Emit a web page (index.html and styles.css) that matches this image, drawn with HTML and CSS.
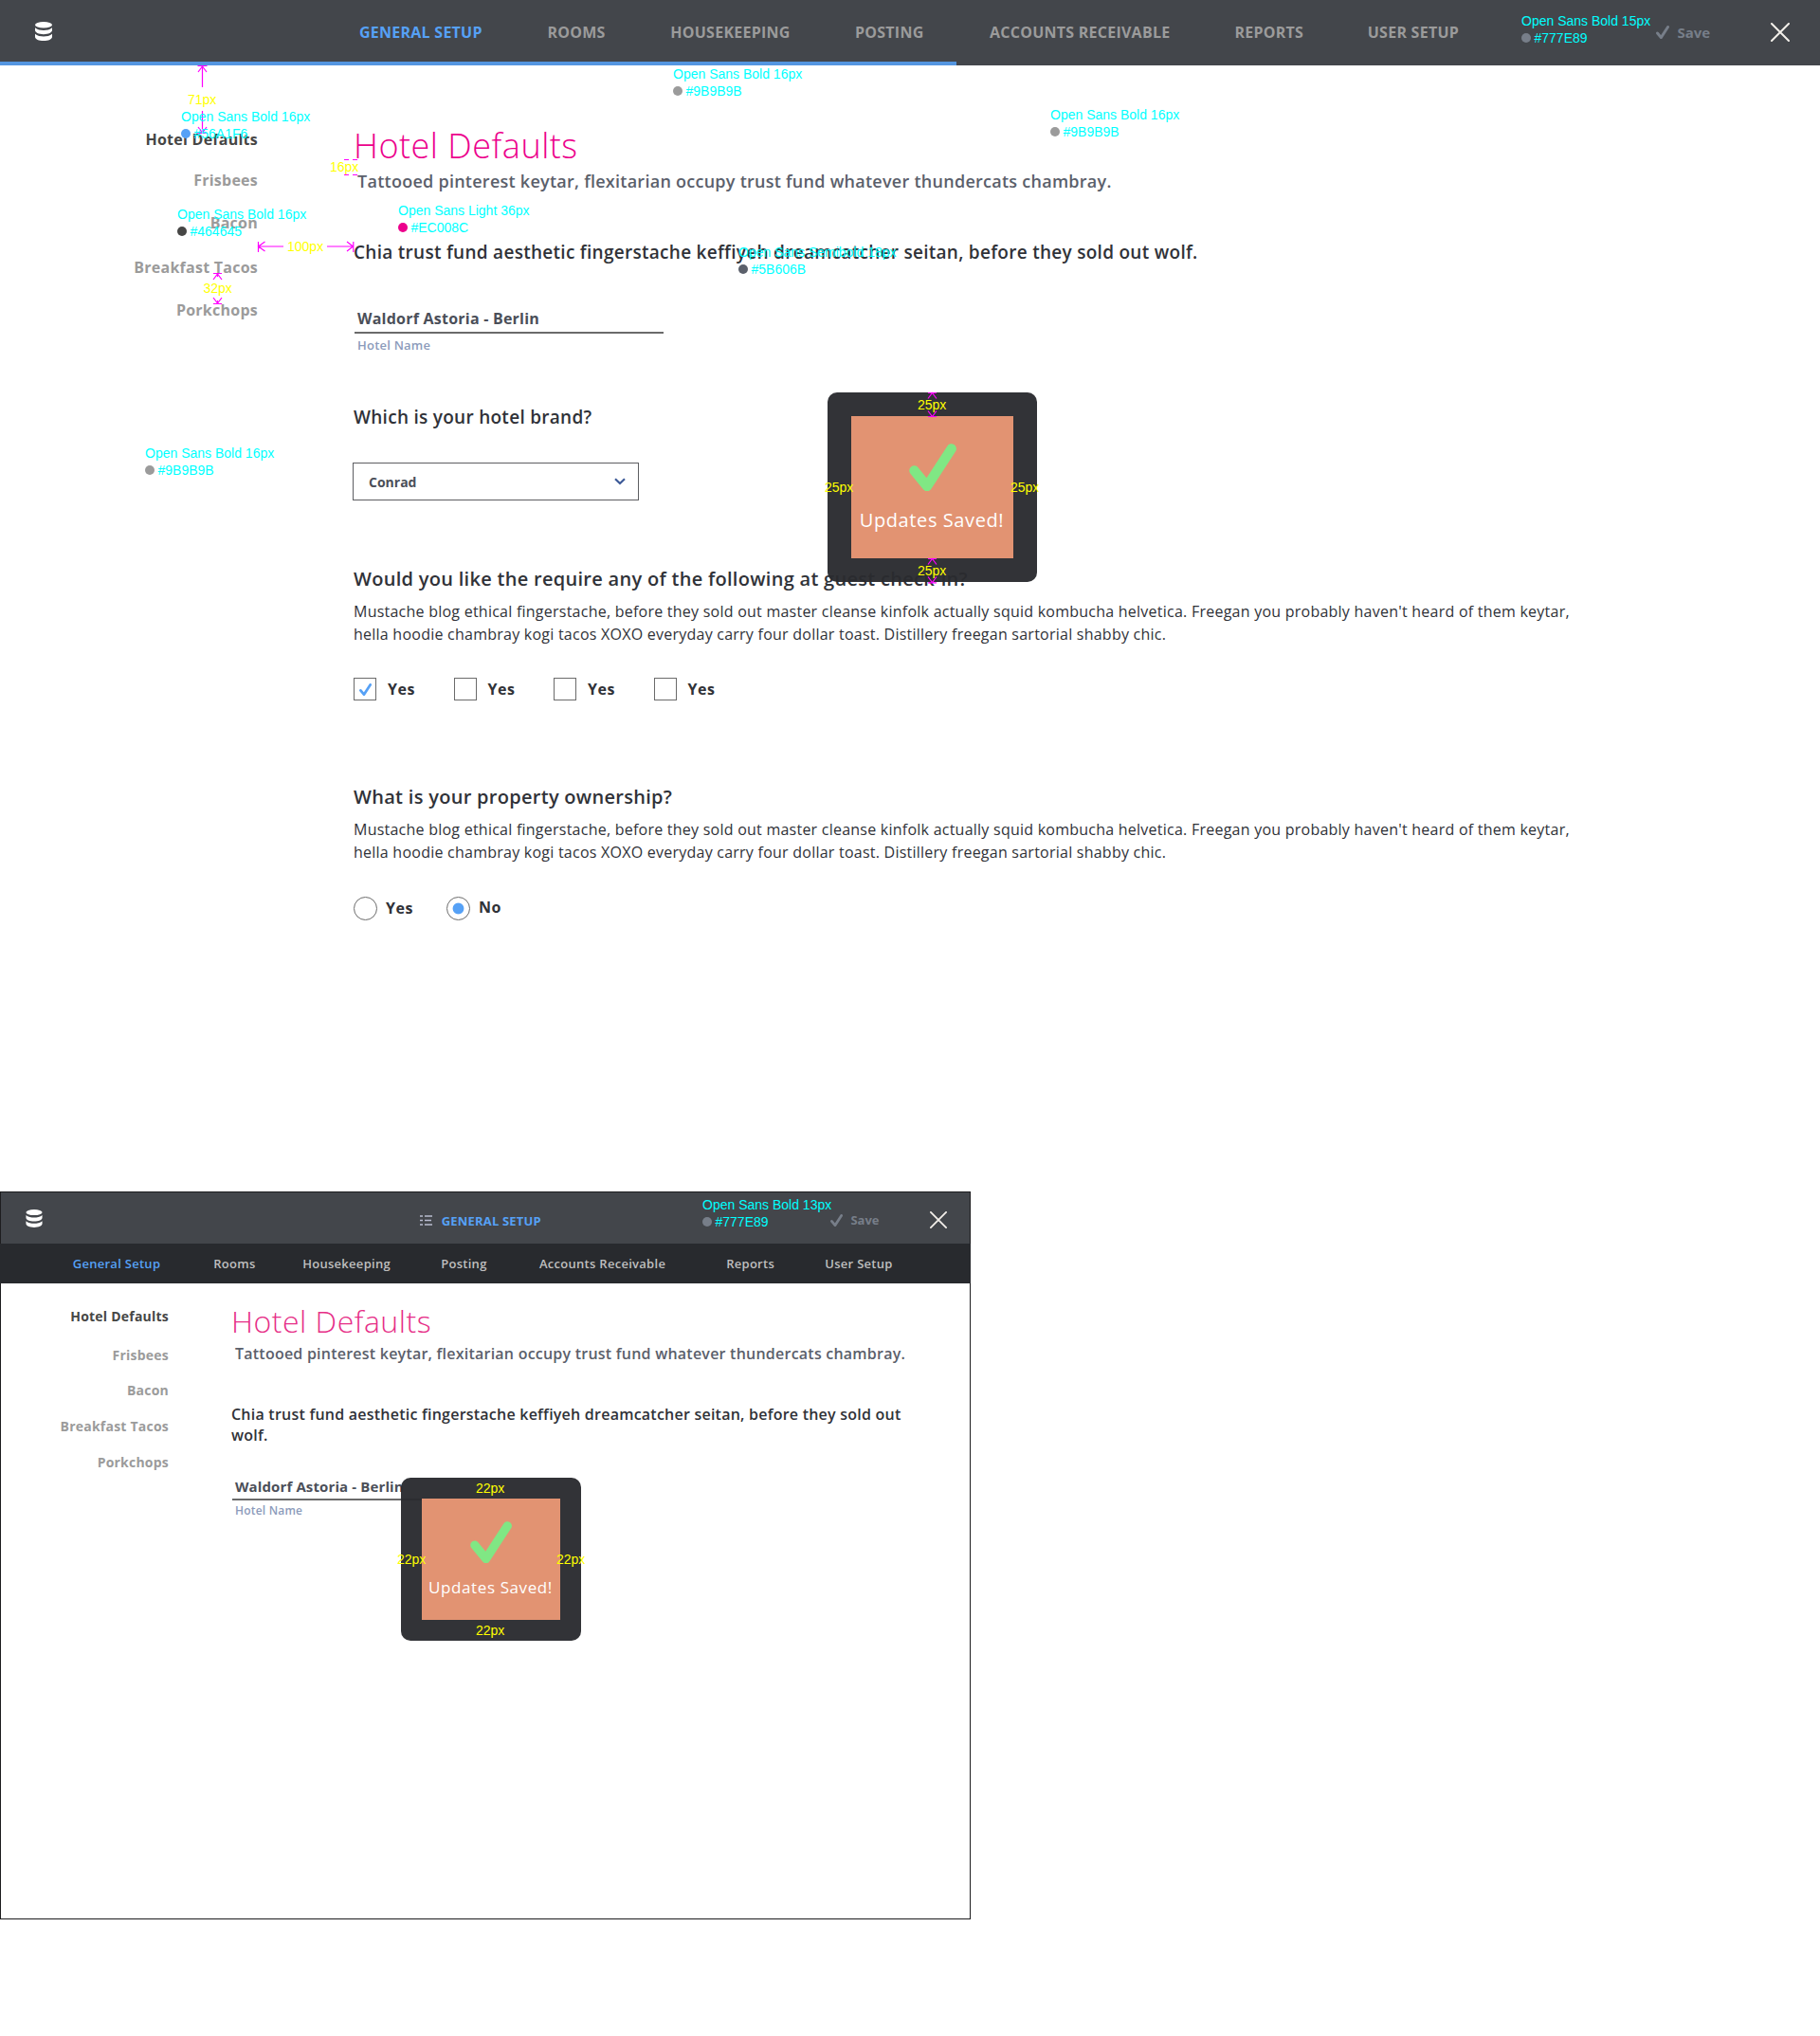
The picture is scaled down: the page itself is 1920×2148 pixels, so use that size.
FILE: index.html
```html
<!DOCTYPE html>
<html lang="en">
<head>
<meta charset="utf-8">
<title>General Setup</title>
<link rel="stylesheet" href="styles.css">
</head>
<body>
<svg class="sprite" aria-hidden="true">
  <symbol id="db" viewBox="0 0 18 20"><ellipse cx="9" cy="3.2" rx="9" ry="3.2"/><path d="M0 6.2C2 8.4 6 8.9 9 8.9s7-.5 9-2.7v2.9c0 2.2-4 4.1-9 4.1S0 11.300 0 9.100z"/><path d="M0 12.800C2 15 6 15.500 9 15.500s7-.5 9-2.700v3.100c0 2.200-4 4.100-9 4.100s-9-1.900-9-4.100z"/></symbol>
  <symbol id="close" viewBox="0 0 20 20"><path d="M1 1l18 18M19 1L1 19" fill="none" stroke="#f3efea" stroke-width="2" stroke-linecap="round"/></symbol>
  <symbol id="tick" viewBox="0 0 50 50"><path d="M5.500 28.500L19 45 44.700 5.500" fill="none" stroke="currentColor" stroke-width="10.500" stroke-linecap="round" stroke-linejoin="round"/></symbol>
</svg>

<section class="desktop">
  <header class="bar">
    <svg class="logo"><use href="#db"/></svg>
    <nav class="tabs">
      <a class="on">GENERAL SETUP</a><a>ROOMS</a><a>HOUSEKEEPING</a><a>POSTING</a><a>ACCOUNTS RECEIVABLE</a><a>REPORTS</a><a>USER SETUP</a>
    </nav>
    <span class="save"><svg><use href="#tick"/></svg><b>Save</b></span>
    <svg class="close"><use href="#close"/></svg>
    <i class="progress"></i>
  </header>
  <div class="body">
    <aside class="side"><a class="on">Hotel Defaults</a><a>Frisbees</a><a>Bacon</a><a>Breakfast Tacos</a><a>Porkchops</a></aside>
    <main class="main">
      <h1>Hotel Defaults</h1>
      <p class="sub">Tattooed pinterest keytar, flexitarian occupy trust fund whatever thundercats chambray.</p>
      <p class="q intro">Chia trust fund aesthetic fingerstache keffiyeh dreamcatcher seitan, before they sold out wolf.</p>
      <div class="field"><div class="value">Waldorf Astoria - Berlin</div><label>Hotel Name</label></div>
      <h2 class="q brand">Which is your hotel brand?</h2>
      <div class="select"><span>Conrad</span><svg viewBox="0 0 12 8"><path d="M1 1.200l5 4.800 5-4.800" fill="none" stroke="#3d5a98" stroke-width="2.200"/></svg></div>
      <h2 class="q checkin">Would you like the require any of the following at guest check-in?</h2>
      <p class="copy">Mustache blog ethical fingerstache, before they sold out master cleanse kinfolk actually squid kombucha helvetica. Freegan you probably haven't heard of them keytar,<br>hella hoodie chambray kogi tacos XOXO everyday carry four dollar toast. Distillery freegan sartorial shabby chic.</p>
      <div class="checks">
        <label><i class="box"><svg><use href="#tick"/></svg></i><span>Yes</span></label><label><i class="box"></i><span>Yes</span></label><label><i class="box"></i><span>Yes</span></label><label><i class="box"></i><span>Yes</span></label>
      </div>
      <h2 class="q owner">What is your property ownership?</h2>
      <p class="copy">Mustache blog ethical fingerstache, before they sold out master cleanse kinfolk actually squid kombucha helvetica. Freegan you probably haven't heard of them keytar,<br>hella hoodie chambray kogi tacos XOXO everyday carry four dollar toast. Distillery freegan sartorial shabby chic.</p>
      <div class="radios">
        <label><i class="dot"></i><span>Yes</span></label><label class="no"><i class="dot sel"></i><span>No</span></label>
      </div>
    </main>
  </div>
  <div class="toast"><div class="inner"><svg><use href="#tick"/></svg><p>Updates Saved!</p></div></div>
</section>

<section class="tablet">
  <header class="bar">
    <svg class="logo"><use href="#db"/></svg>
    <svg class="list" viewBox="0 0 13 11"><path d="M0 1h3M5 1h8M0 5.500h3M5 5.500h7M0 10h3M5 10h8" stroke="#b9bdd0" stroke-width="1.700"/></svg>
    <b class="here">GENERAL SETUP</b>
    <span class="save"><svg><use href="#tick"/></svg><b>Save</b></span>
    <svg class="close"><use href="#close"/></svg>
  </header>
  <nav class="subnav"><a class="on">General Setup</a><a>Rooms</a><a>Housekeeping</a><a>Posting</a><a>Accounts Receivable</a><a>Reports</a><a>User Setup</a></nav>
  <div class="body">
    <aside class="side"><a class="on">Hotel Defaults</a><a>Frisbees</a><a>Bacon</a><a>Breakfast Tacos</a><a>Porkchops</a></aside>
    <main class="main">
      <h1>Hotel Defaults</h1>
      <p class="sub">Tattooed pinterest keytar, flexitarian occupy trust fund whatever thundercats chambray.</p>
      <p class="q intro">Chia trust fund aesthetic fingerstache keffiyeh dreamcatcher seitan, before they sold out<br>wolf.</p>
      <div class="field"><div class="value">Waldorf Astoria - Berlin</div><label>Hotel Name</label></div>
    </main>
  </div>
  <div class="toast"><div class="inner"><svg><use href="#tick"/></svg><p>Updates Saved!</p></div></div>
</section>

<!-- Spec annotations: measuring lines, distances and text styles -->
<svg class="lines" width="1920" height="2148" fill="none" stroke="#f0f" stroke-width="1.200">
  <path d="M208.500 69.500h10M209 76l4.500-6 4.500 6M213.500 70v22M213.500 117v24M208.500 140.500h10M209 134l4.500 6 4.500-6"/>
  <path d="M363 168.500h5M372 168.500h5M363 184.500h5M372 184.500h5"/>
  <path d="M272.500 255v11M279.500 255l-7 5 7 5M273 260h26M345 260h28M372.800 255v11M366 255l6.500 5-6.500 5"/>
  <path d="M225 288.500h9M225 295l4.500-6 4.500 6M229.500 289v3M225 320.500h9M225 314l4.500 6 4.500-6M229.500 317v3"/>
  <path d="M979 414.500h9M979 420.500l4.500-6 4.500 6M979 439.500h9M979 433.500l4.500 6 4.500-6"/>
  <path d="M979 589.500h9M979 595.500l4.500-6 4.500 6M979 614.800h9M979 608.500l4.500 6 4.500-6"/>
</svg>
<span class="px p71">71px</span><span class="px p16">16px</span><span class="px p100">100px</span><span class="px p32">32px</span>
<span class="px p25t">25px</span><span class="px p25b">25px</span><span class="px p25l">25px</span><span class="px p25r">25px</span>
<span class="px p22t">22px</span><span class="px p22b">22px</span><span class="px p22l">22px</span><span class="px p22r">22px</span>
<div class="note na">Open Sans Bold 16px<br><i></i>#56A1F6</div>
<div class="note nb">Open Sans Bold 16px<br><i></i>#464645</div>
<div class="note nc">Open Sans Light 36px<br><i></i>#EC008C</div>
<div class="note nd">Open Sans Bold 16px<br><i></i>#9B9B9B</div>
<div class="note ne">Open Sans Bold 16px<br><i></i>#9B9B9B</div>
<div class="note nf">Open Sans Bold 15px<br><i></i>#777E89</div>
<div class="note ng">Open Sans Semibold 18px<br><i></i>#5B606B</div>
<div class="note nh">Open Sans Bold 16px<br><i></i>#9B9B9B</div>
<div class="note ni">Open Sans Bold 13px<br><i></i>#777E89</div>
</body>
</html>
```
FILE: styles.css
```css
* { box-sizing: border-box; }
body { margin: 0; background: #fff; font-family: "Open Sans", sans-serif; color: #303238; width: 1920px; height: 2148px; position: relative; overflow: hidden; }
h1, h2, p { margin: 0; font-weight: inherit; white-space: nowrap; }
i { font-style: normal; }
.sprite { position: absolute; width: 0; height: 0; }
svg { display: block; flex: none; }
.bar, .save, .body, .checks, .radios, label { display: flex; align-items: center; }
.bar a, .side a, .subnav a { white-space: nowrap; }
.logo { fill: #fff; }

/* Desktop screen */
.desktop { position: relative; height: 1257px; }
.desktop .bar { position: relative; height: 69px; background: #43464b; padding: 0 0 1px 37px; }
.desktop .logo { width: 18px; height: 20px; margin-top: -2px; }
.tabs { display: grid; grid-template-columns: 198.500px 129.800px 194.700px 142px 258.400px 140.400px 100px; margin-left: 324px; font-size: 16px; font-weight: 700; line-height: 22px; letter-spacing: .25px; color: #9b9b9b; }
.tabs .on { color: #56a1f6; }
.save { color: #777e89; }
.desktop .save { font-size: 15px; margin-left: 204.200px; gap: 8.500px; }
.save svg { width: 14px; height: 14px; }
.desktop .close { width: 20px; height: 20px; margin-left: 63.800px; }
.progress { position: absolute; left: 0; bottom: 0; width: 1009px; height: 4px; background: #5495e0; }

.body { align-items: flex-start; }
.side { display: flex; flex-direction: column; align-items: flex-end; font-weight: 700; color: #9b9b9b; }
.side .on { color: #464645; }
.desktop .side { width: 272px; padding-top: 67px; font-size: 16px; line-height: 22px; letter-spacing: .25px; gap: 23px; }
.desktop .side a:nth-child(2) { margin-top: -2px; }
.desktop .side a:nth-child(4) { margin-top: 2px; }
.main { flex: none; }
.desktop .main { width: 1300px; margin-left: 101px; }
.desktop h1 { margin-top: 60px; font-size: 36px; line-height: 50px; font-weight: 300; letter-spacing: .5px; color: #ec008c; }
.sub { color: #5b606b; font-weight: 600; }
.desktop .sub { margin: 0 0 0 4px; font-size: 18px; line-height: 24px; letter-spacing: .26px; }
.q { font-weight: 600; }
.desktop .q { font-size: 20px; line-height: 24px; letter-spacing: .29px; }
.desktop .intro, .desktop .brand { font-size: 19px; letter-spacing: .28px; }
.desktop .intro { margin-top: 51px; }
.field { margin-top: 47px; width: 326px; margin-left: 1px; }
.value { font-size: 16px; line-height: 22px; font-weight: 700; letter-spacing: .23px; color: #4b4f59; border-bottom: 2px solid #6b6b6b; padding: 0 0 3px 3px; }
.field label { font-size: 13px; line-height: 18px; font-weight: 600; letter-spacing: .22px; color: #8c9bbb; margin: 3px 0 0 3px; }
.brand { margin-top: 55px; }
.select { margin-top: 36px; width: 302px; height: 40px; margin-left: -1px; border: 1px solid #5d5e62; display: flex; align-items: center; justify-content: space-between; padding: 0 13px 0 16px; font-size: 14px; font-weight: 700; color: #4b4f59; }
.select svg { width: 12px; height: 8px; }
.checkin { margin-top: 71px; }
.copy { margin-top: 10px; font-size: 16px; line-height: 24px; letter-spacing: .24px; }
.checks { margin-top: 34px; height: 24px; font-weight: 700; font-size: 16px; letter-spacing: .55px; }
.checks label { width: 105.500px; gap: 12px; }
.box { width: 24px; height: 24px; border: 1px solid #6b6b6b; display: grid; place-items: center; color: #56a1f6; }
.box svg { width: 13px; height: 13px; }
.owner { margin-top: 90px; }
.radios { margin-top: 35px; height: 25px; font-weight: 700; font-size: 16px; letter-spacing: .5px; }
.radios label { width: 98px; gap: 9px; }
.radios span { margin-bottom: 1px; }
.radios .no span { margin-bottom: 3px; }
.dot { width: 25px; height: 25px; border: 1px solid #6b6b6b; border-radius: 50%; }
.sel { background: radial-gradient(circle, #56a1f6 5.500px, transparent 6.300px); }

/* Confirmation toast, floating over each screen */
.toast { position: absolute; background: rgba(42, 43, 47, .96); border-radius: 10px; color: #fff; }
.inner { background: #e29372; height: 100%; display: flex; flex-direction: column; align-items: center; }
.inner svg { color: #80e784; }
.inner p { letter-spacing: .6px; }
.desktop .toast { left: 873px; top: 414px; width: 221px; height: 200px; padding: 25px; }
.desktop .inner svg { width: 50px; height: 50px; margin-top: 29px; }
.desktop .inner p { font-size: 20px; line-height: 28px; margin: 17px 1px 0 0; }

/* Tablet screen */
.tablet { position: relative; width: 1024px; height: 768px; border: 1px solid #1d1d1f; }
.tablet .bar { height: 54px; background: #43464b; padding: 4px 0 0 26px; }
.tablet .logo { width: 18px; height: 19px; margin-top: -4px; }
.list { width: 13px; height: 11px; margin-left: 398px; }
.here { font-size: 13px; letter-spacing: .19px; margin: 1px 0 0 9.700px; color: #56a1f6; }
.tablet .save { font-size: 13px; margin-left: 305px; gap: 8.500px; }
.tablet .save svg { width: 13px; height: 13px; }
.tablet .close { width: 18px; height: 18px; margin-left: 53.400px; }
.subnav { margin: 0 -1px; height: 42px; background: #282a2e; display: grid; grid-template-columns: 148.500px 94px 146px 103.800px 197.200px 104.100px 100px; align-items: center; padding-left: 76.700px; font-size: 13px; font-weight: 600; letter-spacing: .28px; color: #bfbfbf; }
.subnav .on { color: #56a1f6; }
.tablet .side { width: 177px; padding-top: 25px; font-size: 14px; line-height: 20px; letter-spacing: .22px; gap: 18px; }
.tablet .side a:nth-child(2) { margin-top: 3px; }
.tablet .side a:nth-child(3) { margin-top: -1px; }
.tablet .main { margin-left: 66px; width: 720px; }
.tablet h1 { margin-top: 18px; font-size: 32px; line-height: 44px; font-weight: 300; letter-spacing: .5px; color: #e62e87; }
.tablet .sub { font-size: 16px; line-height: 22px; letter-spacing: .23px; margin: 1px 0 0 4px; }
.tablet .intro { font-size: 16px; line-height: 22px; letter-spacing: .23px; margin-top: 42px; }
.tablet .field { margin-top: 32px; }
.tablet .value { font-size: 15px; letter-spacing: .12px; padding-bottom: 2px; }
.tablet .field label { font-size: 12px; letter-spacing: .2px; margin-top: 2px; }
.tablet .toast { left: 422px; top: 301px; width: 190px; height: 172px; padding: 22px; }
.tablet .inner svg { width: 44px; height: 44px; margin-top: 24px; }
.tablet .inner p { font-size: 17px; line-height: 24px; margin: 14px 1px 0 0; }

/* Annotations */
.lines { position: absolute; left: 0; top: 0; }
.px, .note { position: absolute; font: 14px/18px "Liberation Sans", Arial, sans-serif; white-space: nowrap; }
.px { color: #ff0; }
.note { color: #0ff; }
.note i { display: inline-block; width: 10px; height: 10px; border-radius: 50%; margin-right: 3.500px; vertical-align: .5px; }
.p71 { left: 198px; top: 96px; }
.p16 { left: 348px; top: 167px; }
.p100 { left: 303px; top: 251px; }
.p32 { left: 214.500px; top: 295px; }
.p25t { left: 968px; top: 418px; }
.p25b { left: 968px; top: 593px; }
.p25l { left: 870px; top: 505px; }
.p25r { left: 1066px; top: 505px; }
.p22t { left: 502px; top: 1561px; }
.p22b { left: 502px; top: 1711px; }
.p22l { left: 419px; top: 1636px; }
.p22r { left: 587px; top: 1636px; }
.na { left: 191px; top: 114px; }
.na i { background: #56a1f6; }
.nb { left: 187px; top: 217px; }
.nb i { background: #464645; }
.nc { left: 420px; top: 213px; }
.nc i { background: #ec008c; }
.nd { left: 710px; top: 69px; }
.ne { left: 1108px; top: 112px; }
.nd i, .ne i, .nh i { background: #9b9b9b; }
.nf { left: 1605px; top: 13px; }
.ng { left: 779px; top: 257px; }
.ng i { background: #5b606b; }
.nh { left: 153px; top: 469px; }
.ni { left: 741px; top: 1262px; }
.nf i, .ni i { background: #777e89; }
```
